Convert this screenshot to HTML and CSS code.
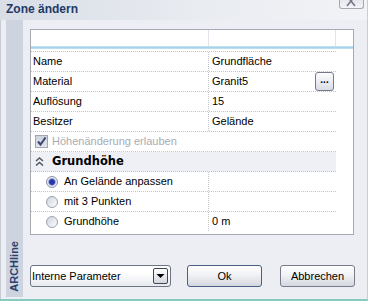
FILE: index.html
```html
<!DOCTYPE html>
<html lang="de">
<head>
<meta charset="utf-8">
<title>Zone ändern</title>
<link rel="stylesheet" href="styles.css">
</head>
<body>
<div class="win">
  <div class="titlebar">
    <span class="title">Zone ändern</span>
    <div class="close">
      <svg width="23" height="8" viewBox="0 0 23 8"><path d="M7 -4 L15 6 M15 -4 L7 6" stroke="#737985" stroke-width="1.6" fill="none"/></svg>
    </div>
  </div>
  <div class="main">
    <div class="strip"><span class="brand">ARCHline</span></div>
    <div class="content">
      <div class="panel">
        <div class="hdr"><div class="hc1"></div><div class="hc2"></div></div>
        <div class="blueline"></div>
        <div class="rows">
          <div class="row"><div class="c1">Name</div><div class="c2">Grundfläche</div></div>
          <div class="row"><div class="c1">Material</div><div class="c2"><span>Granit5</span><span class="dots">...</span></div></div>
          <div class="row"><div class="c1">Auflösung</div><div class="c2">15</div></div>
          <div class="row"><div class="c1">Besitzer</div><div class="c2">Gelände</div></div>
          <div class="row full disabled">
            <span class="check"><svg width="11" height="11" viewBox="0 0 11 11"><path d="M2 5.5 L4.5 8.5 L9.5 1.5" stroke="#3d4672" stroke-width="2" fill="none"/></svg></span>
            <span>Höhenänderung erlauben</span>
          </div>
          <div class="row full group">
            <svg class="chev" width="9" height="9" viewBox="0 0 9 9"><path d="M1 4 L4.5 1 L8 4 M1 8.5 L4.5 5.5 L8 8.5" stroke="#4f5562" stroke-width="1.5" fill="none"/></svg>
            <span>Grundhöhe</span>
          </div>
          <div class="row"><div class="c1 opt"><span class="radio on"></span><span>An Gelände anpassen</span></div><div class="c2"></div></div>
          <div class="row"><div class="c1 opt"><span class="radio"></span><span>mit 3 Punkten</span></div><div class="c2"></div></div>
          <div class="row last"><div class="c1 opt"><span class="radio"></span><span>Grundhöhe</span></div><div class="c2">0 m</div></div>
        </div>
      </div>
      <div class="buttons">
        <div class="select">
          <span>Interne Parameter</span>
          <span class="arrow"><svg width="9" height="6" viewBox="0 0 9 6"><path d="M0.5 1 L8.5 1 L4.5 5 Z" fill="#000"/></svg></span>
        </div>
        <div class="btn ok">Ok</div>
        <div class="btn cancel">Abbrechen</div>
      </div>
    </div>
  </div>
</div>
</body>
</html>
```
FILE: styles.css
```css
* { box-sizing: border-box; }
html, body { margin: 0; padding: 0; }
body {
  width: 368px;
  height: 301px;
  overflow: hidden;
  background: #eceef4;
  font-family: "Liberation Sans", Arial, sans-serif;
  font-size: 11px;
  color: #000;
}
.win {
  width: 368px;
  height: 301px;
  display: flex;
  flex-direction: column;
  background: #eceef4;
  border-bottom: 2px solid #86cbbd;
  border-right: 1px solid #c9cdd6;
}
.titlebar {
  height: 20px;
  flex: none;
  display: flex;
  align-items: flex-start;
  padding-left: 6px;
  background: linear-gradient(to right, #d8dde6, #e9ecf1 55%, #f2f3f6);
}
.title {
  font-weight: bold;
  font-size: 12px;
  color: #1d3a66;
  line-height: 16px;
  margin-top: 1px;
}
.close {
  margin-left: auto;
  margin-right: 3px;
  width: 25px;
  height: 9px;
  border: 1px solid #a3a8b2;
  border-top: none;
  border-radius: 0 0 3px 3px;
  background: linear-gradient(#e4e7ed, #f4f5f8);
  display: flex;
  overflow: hidden;
}
.close svg { display: block; }
.main {
  flex: 1;
  display: flex;
  border-left: 1px solid #c5cad3;
  padding-left: 5px;
}
.strip {
  width: 17px;
  margin-bottom: 2px;
  background: #cdd4df;
  display: flex;
  align-items: flex-end;
  justify-content: center;
  padding-bottom: 5px;
}
.brand {
  writing-mode: vertical-rl;
  transform: rotate(180deg);
  font-weight: bold;
  font-size: 11px;
  line-height: 17px;
  color: #2b3f6b;
}
.content {
  margin-left: 7px;
  padding-top: 9px;
  display: flex;
  flex-direction: column;
}
.panel {
  width: 324px;
  height: 206px;
  border: 1px solid #a4a9b4;
  background: #fff;
}
.hdr { display: flex; height: 16px; }
.hc1 { width: 178px; border-right: 1px solid #dfe3ea; }
.hc2 { width: 127px; border-right: 1px solid #dfe3ea; }
.blueline {
  height: 3px;
  margin-bottom: 2px;
  background: linear-gradient(#cde7f4, #a8d3ea, #c8e4f2);
}
.rows {
  width: 305px;
  border-top: 1px dotted #c2c4cc;
}
.row {
  display: flex;
  height: 20px;
  line-height: 19px;
  border-bottom: 1px dotted #c2c4cc;
}
.row.last { border-bottom: none; height: 19px; }
.c1 { width: 177px; padding-left: 2px; white-space: nowrap; }
.c2 {
  flex: 1;
  border-left: 1px dotted #c2c4cc;
  padding-left: 3px;
  padding-right: 2px;
  display: flex;
  align-items: center;
  justify-content: space-between;
  white-space: nowrap;
}
.dots {
  width: 19px;
  height: 19px;
  border: 1px solid #737b89;
  border-radius: 3px;
  background: linear-gradient(#fdfdfe, #dadde5);
  display: flex;
  justify-content: center;
  align-items: center;
  font-size: 10px;
  line-height: 10px;
  padding-bottom: 4px;
  font-weight: bold;
}
.row.full {
  align-items: center;
  padding-left: 4px;
  gap: 4px;
}
.disabled { color: #a8abb4; }
.check {
  width: 13px;
  height: 13px;
  border: 1px solid #a2a6b1;
  background: linear-gradient(#cfd3db, #e1e4ea);
  display: flex;
  align-items: center;
  justify-content: center;
}
.check svg { display: block; }
.group {
  background: #eef0f6;
  font-family: "DejaVu Sans", sans-serif;
  font-weight: bold;
  font-size: 11.5px;
}
.chev { display: block; flex: none; margin-right: 4px; }
.opt {
  display: flex;
  align-items: center;
  gap: 6px;
  padding-left: 15px;
}
.radio {
  width: 12px;
  height: 12px;
  border-radius: 50%;
  border: 1px solid #9aa1b0;
  background: linear-gradient(135deg, #cfd5df, #fbfcfd);
  flex: none;
  display: flex;
  align-items: center;
  justify-content: center;
}
.radio.on {
  border-color: #8a92a4;
  background: radial-gradient(circle, #2131a6 0, #2a3bb0 2.5px, #8e97d0 3.3px, #e9ebf2 4.2px, #dfe3ea 6px);
}
.buttons {
  display: flex;
  margin-top: 30px;
  height: 22px;
}
.select {
  width: 141px;
  height: 22px;
  border: 1px solid #6d7584;
  border-radius: 3px;
  background: linear-gradient(#ffffff 35%, #e7e9ee);
  display: flex;
  align-items: center;
  justify-content: space-between;
  padding-left: 1px;
  padding-right: 2px;
  white-space: nowrap;
}
.arrow {
  width: 15px;
  height: 16px;
  border: 1px solid #3f4755;
  border-radius: 2px;
  background: linear-gradient(#ffffff, #d3d7df);
  display: flex;
  align-items: center;
  justify-content: center;
}
.arrow svg { display: block; }
.btn {
  width: 75px;
  height: 22px;
  border: 1px solid #767c88;
  border-radius: 3px;
  background: linear-gradient(#fefefe, #f1f2f5 45%, #d3d7df);
  display: flex;
  align-items: center;
  justify-content: center;
}
.ok { margin-left: 16px; border-color: #4a5f86; }
.cancel { margin-left: 18px; }
```
